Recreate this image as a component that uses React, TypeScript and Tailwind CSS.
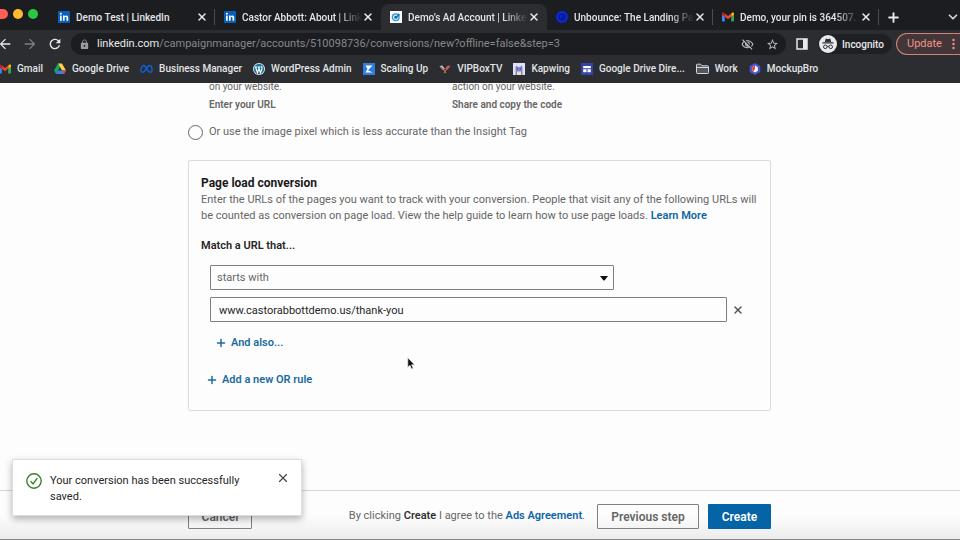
import type { ReactNode } from 'react';
import { ChevronDown, Plus, X } from 'lucide-react';
import { MdArrowBack, MdArrowForward, MdLock, MdOutlineVisibilityOff, MdRefresh, MdStarBorder } from 'react-icons/md';

const LinkedInIcon = () => (
  <svg viewBox="0 0 12 12" className="w-3 h-3 shrink-0">
    <rect width="12" height="12" rx="1" fill="#0a5fb8" />
    <rect x="2" y="4.6" width="1.7" height="5.2" fill="#fff" />
    <circle cx="2.85" cy="2.8" r="1" fill="#fff" />
    <path d="M5 4.6h1.6v.8c.4-.6 1-.9 1.7-.9 1.3 0 1.9.8 1.9 2.2v3.1H8.5V7c0-.7-.3-1.1-.9-1.1s-1 .4-1 1.2v2.7H5z" fill="#fff" />
  </svg>
);

const CampaignIcon = () => (
  <svg viewBox="0 0 12 12" className="w-3 h-3 shrink-0">
    <rect width="12" height="12" fill="#fff" />
    <circle cx="5.7" cy="6.3" r="3.4" fill="#cfe8f5" stroke="#2f9bd0" strokeWidth="1.3" />
    <circle cx="5.7" cy="6.3" r="1.5" fill="#1b6fa8" />
    <path d="M6 6l2.8-3.8.4 1 1.2.4L7 6.8z" fill="#1b6fa8" />
  </svg>
);

const UnbounceIcon = () => (
  <svg viewBox="0 0 12 12" className="w-3 h-3 shrink-0">
    <circle cx="6" cy="6" r="6" fill="#0a27d8" />
    <circle cx="6" cy="6" r="3" fill="none" stroke="#081466" strokeWidth="1" />
    <path d="M5 8.5l2-5M7 8.5l1-2.5" stroke="#081466" strokeWidth="1" />
  </svg>
);

const GmailIcon = () => (
  <svg viewBox="0 0 12 9" className="w-3 h-3 shrink-0">
    <path d="M0 1.5v6.7c0 .4.3.8.8.8h2V4.2z" fill="#4285f4" />
    <path d="M12 1.5v6.7c0 .4-.3.8-.8.8h-2V4.2z" fill="#34a853" />
    <path d="M9.2 1v3.3L12 2.2V1.1C12 .1 10.9-.3 10.1.3z" fill="#fbbc04" />
    <path d="M2.8 4.3V1L6 3.4 9.2 1v3.3L6 6.7z" fill="#ea4335" />
    <path d="M0 1.1v1.1l2.8 2.1V1L1.9.3C1.1-.3 0 .1 0 1.1z" fill="#c5221f" />
  </svg>
);

const DriveIcon = () => (
  <svg viewBox="0 0 12 11" className="w-3 h-3 shrink-0">
    <path d="M4 0L0 7l2 3.5L6 3.5z" fill="#11a861" />
    <path d="M4 0h4l4 7H8z" fill="#ffcf48" />
    <path d="M4 7h8l-2 3.5H2z" fill="#3b7ded" />
    <path d="M8 7h4l-2 3.5z" fill="#e94435" />
  </svg>
);

const MetaIcon = () => (
  <svg viewBox="0 0 14 10" className="w-[13px] h-3 shrink-0">
    <path
      d="M1 7C1 4 2.3 1.3 4 1.3c2.500 0 4 7.200 6.800 7.200 1.500 0 2.200-1 2.200-2.500C13 3.300 11.800 1.300 10.200 1.300 7.500 1.300 6 8.500 3 8.500 1.700 8.500 1 8 1 7z"
      fill="none"
      stroke="#0c63dc"
      strokeWidth="1.5"
    />
  </svg>
);

const WordPressIcon = () => (
  <svg viewBox="0 0 12 12" className="w-3 h-3 shrink-0">
    <circle cx="6" cy="6" r="6" fill="#e8f3f8" />
    <circle cx="6" cy="6" r="5.2" fill="#21759b" />
    <path d="M1.8 4h2.6M5 4h2.6M2.5 4l2 5.8L6.1 5.3M5.5 4l2 5.8L9 5.5c.3-1-.7-1.6-.3-2.5" fill="none" stroke="#fff" strokeWidth="1.1" />
  </svg>
);

const ScalingIcon = () => (
  <svg viewBox="0 0 12 12" className="w-3 h-3 shrink-0">
    <rect width="12" height="12" fill="#2f7de1" />
    <path d="M2.5 2.5h7L5 7.2l4.7 2.3H2.5L4.5 6z" fill="#fff" />
  </svg>
);

const VipIcon = () => (
  <svg viewBox="0 0 12 12" className="w-3 h-3 shrink-0">
    <path d="M4 5.5l3 4.5M8 5.5L5 10" stroke="#a9765c" strokeWidth="1.2" />
    <path d="M.5 3.5l2.5-1.2 2.8 3.2L4 7z" fill="#c7bfc0" />
    <path d="M11.5 3.5L9 2.3 6.2 5.5 8 7z" fill="#cf5a58" />
    <path d="M1.5 4l3 2" stroke="#c0504d" strokeWidth="1" />
  </svg>
);

const KapwingIcon = () => (
  <svg viewBox="0 0 12 12" className="w-3 h-3 shrink-0">
    <rect width="12" height="12" fill="#dfe2f7" />
    <path d="M2.5 12V4l1-1.5L5 4h2l1.5-1.5 1 1.5v8z" fill="#7f86cf" />
    <path d="M4 12V8.500h4V12z" fill="#f1dfaa" />
    <path d="M4 6h1M7 6h1" stroke="#2b2f6b" />
  </svg>
);

const SitesIcon = () => (
  <svg viewBox="0 0 12 12" className="w-3 h-3 shrink-0">
    <rect width="12" height="12" fill="#3443a8" />
    <path d="M2.2 3h7.600v2.200H2.200zM2.200 6.200h3.300v3.100H2.200zM6.500 6.200h3.300v3.100H6.500z" fill="#fff" />
  </svg>
);

const FolderIcon = () => (
  <svg viewBox="0 0 13 11" className="w-[13px] h-3 shrink-0" fill="#55585c" stroke="#d5d7da">
    <path d="M.5 1.500c0-.5.3-.8.8-.8h3.200L6 2.300h5.700c.5 0 .8.300.8.800v6.100c0 .5-.3.800-.8.800H1.300c-.5 0-.8-.3-.8-.8z" />
    <path d="M.5 4h12" />
  </svg>
);

const MockupIcon = () => (
  <svg viewBox="0 0 12 12" className="w-3 h-3 shrink-0">
    <path d="M6 0l5.3 3v6L6 12 .7 9V3z" fill="#4a55cf" />
    <path d="M6 2.6l2.800 1.700v3.400L6 9.400 3.200 7.700V4.300z" fill="#fff" />
    <path d="M3.200 4.300L6 2.600v3.200L4.500 8.500 3.200 7.700z" fill="#e2403f" />
  </svg>
);

const PanelIcon = () => (
  <svg viewBox="0 0 12 12" className="w-3 h-3">
    <rect x="1" y="1" width="10" height="10" fill="none" stroke="#e8eaed" strokeWidth="1.5" />
    <rect x="7" y="1" width="4" height="10" fill="#e8eaed" />
  </svg>
);

const IncognitoIcon = () => (
  <svg viewBox="0 0 18 18" className="w-[18px] h-[18px] shrink-0">
    <circle cx="9" cy="9" r="9" fill="#e8eaed" />
    <path d="M6.5 4.200c.2-.6.6-.7 1.100-.5.900.4 1.900.4 2.800 0 .5-.2.9-.1 1.100.5L12.200 7H5.800zM3.500 7.300h11v1.100h-11z" fill="#2f3236" />
    <g fill="none" stroke="#2f3236">
      <circle cx="6.3" cy="11.8" r="1.8" />
      <circle cx="11.7" cy="11.8" r="1.8" />
      <path d="M8.1 11.5q.9-.6 1.8 0" />
    </g>
  </svg>
);

const CheckIcon = () => (
  <svg viewBox="0 0 16 16" className="w-4 h-4 mt-px shrink-0" fill="none" stroke="#3a8127" strokeWidth="1.4">
    <circle cx="8" cy="8" r="7.2" />
    <path d="M4.6 8.3l2.500 2.600 4.100-5.800" />
  </svg>
);

type Tab = { title: string; icon: ReactNode; active?: boolean; divider?: boolean };

const tabs: Tab[] = [
  { title: 'Demo Test | LinkedIn', icon: <LinkedInIcon />, divider: true },
  { title: 'Castor Abbott: About | Link', icon: <LinkedInIcon /> },
  { title: 'Demo’s Ad Account | Linke', icon: <CampaignIcon />, active: true },
  { title: 'Unbounce: The Landing Pa', icon: <UnbounceIcon />, divider: true },
  { title: 'Demo, your pin is 364507.', icon: <GmailIcon />, divider: true }
];

const bookmarks = [
  { name: 'Gmail', icon: <GmailIcon /> },
  { name: 'Google Drive', icon: <DriveIcon /> },
  { name: 'Business Manager', icon: <MetaIcon /> },
  { name: 'WordPress Admin', icon: <WordPressIcon /> },
  { name: 'Scaling Up', icon: <ScalingIcon /> },
  { name: 'VIPBoxTV', icon: <VipIcon /> },
  { name: 'Kapwing', icon: <KapwingIcon /> },
  { name: 'Google Drive Dire...', icon: <SitesIcon /> },
  { name: 'Work', icon: <FolderIcon /> },
  { name: 'MockupBro', icon: <MockupIcon /> }
];

function TabStrip() {
  return (
    <div className="flex h-[30px] bg-[#1c1d20] pt-1">
      <div className="flex w-[49px] gap-[5px] pt-[5px] shrink-0">
        <span className="w-2 h-[10px] rounded-r-full bg-[#fe5f57]" />
        <span className="w-[10px] h-[10px] rounded-full bg-[#febb2e]" />
        <span className="w-[10px] h-[10px] rounded-full bg-[#28c840]" />
      </div>
      {tabs.map((tab) => (
        <div
          key={tab.title}
          className={`flex flex-1 max-w-[166px] min-w-0 items-center pl-[9px] rounded-t-lg ${tab.active ? 'bg-[#2b2d30]' : ''}`}
        >
          {tab.icon}
          <span
            className={`flex-1 min-w-0 overflow-hidden whitespace-nowrap pl-[6px] text-[10px] font-medium text-[#e3e5e8] ${tab.title.endsWith('LinkedIn') ? '' : 'mask-r-from-80%'}`}
          >
            {tab.title}
          </span>
          <button aria-label="Close tab" className="text-[#e8eaed]">
            <X className="w-3 h-3" strokeWidth={3} />
          </button>
          <span className={`w-px h-4 ml-[6px] ${tab.divider ? 'bg-[#4a4c50]' : ''}`} />
        </div>
      ))}
      <button aria-label="New tab" className="px-[7px] text-[#e8eaed]">
        <Plus className="w-[15px] h-[15px]" strokeWidth={3} />
      </button>
      <button aria-label="Search tabs" className="ml-auto text-[#d4d6d9]">
        <ChevronDown className="w-[14px] h-[14px]" strokeWidth={3} />
      </button>
    </div>
  );
}

function Toolbar() {
  return (
    <div className="flex h-7 items-center bg-[#2b2d30] text-[#e8eaed]">
      <div className="flex w-[71px] shrink-0 items-center gap-[9px]">
        <button aria-label="Back" className="-ml-[3px]"><MdArrowBack className="w-4 h-4" /></button>
        <button aria-label="Forward" className="text-[#7d8084]"><MdArrowForward className="w-4 h-4" /></button>
        <button aria-label="Reload"><MdRefresh className="w-4 h-4" /></button>
      </div>
      <div className="flex flex-1 h-[22px] items-center rounded-full bg-[#1c1d20] pl-2 pr-[7px] text-[11px]">
        <MdLock className="w-[11px] h-[11px] shrink-0 text-[#9a9da1]" />
        <div className="flex-1 pl-[7px] whitespace-nowrap text-[#85888c]">
          <span className="text-[#e8eaed]">linkedin.com</span>/campaignmanager/accounts/510098736/conversions/new?offline=false&amp;step=3
        </div>
        <button aria-label="Third-party cookies blocked" className="mr-3 text-[#c4c7ca]">
          <MdOutlineVisibilityOff className="w-[13px] h-[13px]" />
        </button>
        <button aria-label="Bookmark this tab" className="text-[#c4c7ca]">
          <MdStarBorder className="w-[13px] h-[13px]" />
        </button>
      </div>
      <button aria-label="Side panel" className="px-[10px]"><PanelIcon /></button>
      <div className="flex h-5 w-[74px] items-center gap-[5px] rounded-full bg-[#1f2023] pl-px text-[10px] font-medium">
        <IncognitoIcon />
        Incognito
      </div>
      <button className="flex h-[22px] w-16 shrink-0 items-center justify-between rounded-l-full border border-r-0 border-[#d0827b] bg-[#433638] ml-1 pl-[10px] pr-[5px] text-[11px] text-[#f0958c]">
        Update
        <svg viewBox="0 0 3 12" className="w-[3px] h-3" fill="currentColor">
          <circle cx="1.5" cy="2" r="1.2" />
          <circle cx="1.5" cy="6" r="1.2" />
          <circle cx="1.5" cy="10" r="1.2" />
        </svg>
      </button>
    </div>
  );
}

function BookmarksBar() {
  return (
    <nav className="flex h-[25px] items-center gap-[11px] -ml-px bg-[#2b2d30] pb-1 text-[10px] font-medium whitespace-nowrap text-[#e3e5e8]">
      {bookmarks.map((item) => (
        <a key={item.name} href="#" className="flex items-center gap-[6px]">
          {item.icon}
          {item.name}
        </a>
      ))}
    </nav>
  );
}

function ConversionCard() {
  return (
    <section className="rounded-xs border border-[#dcdcdc] px-3 pt-[14px] pb-[22px]">
      <h2 className="text-[12px] leading-4 font-bold text-[#1a1a1a]">Page load conversion</h2>
      <p className="mt-px text-[11px] leading-4 text-[#666]">
        Enter the URLs of the pages you want to track with your conversion. People that visit any of the following URLs will
        be counted as conversion on page load. View the help guide to learn how to use page loads.{' '}
        <a href="#" className="font-semibold text-[#0d66a6]">Learn More</a>
      </p>
      <h3 className="mt-[14px] text-[11px] leading-4 font-semibold text-[#262626]">Match a URL that...</h3>
      <div className="mt-[11px] ml-[9px] flex flex-col gap-[7px]">
        <div className="relative w-[404px]">
          <select
            aria-label="Match type"
            className="block w-full h-[25px] appearance-none rounded-[1px] border border-[#808080] bg-transparent px-[6px] pt-px text-[11px] text-[#666]"
          >
            <option>starts with</option>
          </select>
          <svg viewBox="0 0 8 5" className="pointer-events-none absolute right-[6px] top-[11px] w-2 h-[5px]">
            <path d="M0 0h8L4.500 4.500h-1z" fill="#111" />
          </svg>
        </div>
        <div className="flex items-center gap-[5px]">
          <input
            aria-label="URL"
            type="text"
            defaultValue="www.castorabbottdemo.us/thank-you"
            className="w-[517px] h-[25px] rounded-[1px] border border-[#808080] px-2 pt-px text-[11px] text-[#262626]"
          />
          <button aria-label="Remove URL" className="text-[#555]"><X className="w-3 h-3" strokeWidth={3} /></button>
        </div>
      </div>
      <div className="mt-[13px] ml-[5px] flex flex-col items-start gap-[21px] text-[11px] leading-4 font-semibold text-[#1b6ba0]">
        <button className="ml-[9px] flex items-center gap-1">
          <Plus className="w-3 h-3" strokeWidth={3} />
          And also...
        </button>
        <button className="flex items-center gap-1">
          <Plus className="w-3 h-3" strokeWidth={3} />
          Add a new OR rule
        </button>
      </div>
    </section>
  );
}

function Toast() {
  return (
    <div role="status" className="absolute bottom-6 left-3 flex w-[290px] h-[57px] gap-2 border border-[#dedede] bg-white px-[13px] pt-3 shadow-[0_3px_7px_rgba(0,0,0,0.3)]">
      <CheckIcon />
      <p className="w-[210px] pt-px text-[11px] leading-4 text-[#262626]">Your conversion has been successfully saved.</p>
      <button aria-label="Dismiss" className="ml-auto -mr-[2px] -mt-px self-start text-[#444]"><X className="w-[14px] h-[14px]" /></button>
    </div>
  );
}

export default function App() {
  return (
    <div className="relative flex h-screen flex-col overflow-hidden bg-[#fdfdfd] font-['Roboto','Liberation_Sans',sans-serif]">
      <header className="bg-[#2b2d30]">
        <TabStrip />
        <Toolbar />
        <BookmarksBar />
      </header>

      <main className="flex-1 min-h-0 overflow-hidden">
        <div className="mx-auto w-[584px] pr-px">
          <div className="grid grid-cols-[243px_1fr] pl-[21px] text-[10px] leading-[14px] text-[#666] -mt-[3px]">
            <div>
              <p>on your website.</p>
              <p className="mt-1 font-semibold">Enter your URL</p>
            </div>
            <div>
              <p>action on your website.</p>
              <p className="mt-1 font-semibold">Share and copy the code</p>
            </div>
          </div>
          <label className="mt-3 mb-5 flex items-center gap-[6px] text-[11px] leading-4 text-[#666]">
            <input type="radio" name="tracking" className="w-[15px] h-[15px] appearance-none rounded-full border border-[#666]" />
            Or use the image pixel which is less accurate than the Insight Tag
          </label>
          <ConversionCard />
        </div>
      </main>

      <footer className="h-[50px] border-t border-[#d6d6d6] bg-linear-to-b from-[#fdfdfd] from-50% to-[#ececec] border-b border-b-[#8a8a8a]">
        <div className="mx-auto flex w-[584px] items-center pr-px pt-[13px] text-[11px] text-[#666]">
          <button className="h-[25px] w-16 rounded-[1px] border border-[#808080] text-[12px] font-semibold">Cancel</button>
          <p className="ml-auto">
            By clicking <strong className="font-semibold text-[#333]">Create</strong> I agree to the{' '}
            <a href="#" className="font-semibold text-[#0d66a6]">Ads Agreement</a>.
          </p>
          <button className="ml-3 h-[25px] w-[102px] rounded-[1px] border border-[#808080] text-[12px] font-semibold">Previous step</button>
          <button className="ml-[9px] h-[25px] w-[63px] rounded-[1px] bg-[#0464a5] text-[12px] font-semibold text-white">Create</button>
        </div>
      </footer>

      <Toast />

      <svg viewBox="0 0 8 13" className="pointer-events-none absolute left-[407px] top-[357px] w-2 h-[13px]">
        <path d="M.8.8v9.500l2.200-2 1.500 3.700 1.600-.7-1.500-3.500h2.900z" fill="#111" stroke="#eee" strokeWidth=".6" />
      </svg>
    </div>
  );
}
